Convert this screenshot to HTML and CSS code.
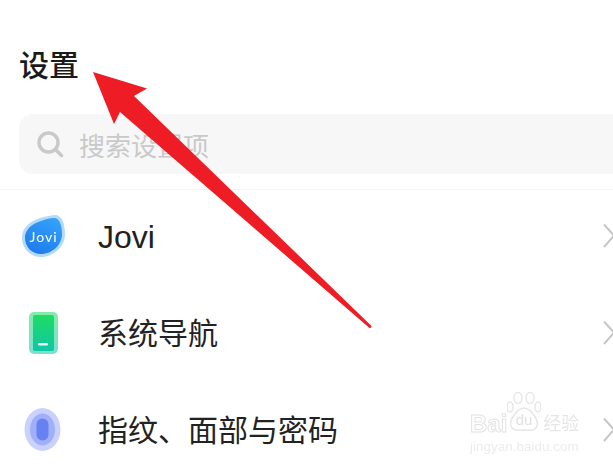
FILE: index.html
```html
<!DOCTYPE html>
<html lang="zh-CN">
<head>
    <meta charset="UTF-8">
    <meta name="viewport" content="width=device-width, initial-scale=1.0">
    <title>设置</title>
    <link rel="stylesheet" href="styles.css">
</head>
<body>
    <div class="page">
        <h1 class="title">设置</h1>
        <div class="search">
            <svg class="search-icon" width="28" height="28" viewBox="0 0 28 28">
                <circle cx="12.5" cy="12.5" r="9.5" fill="none" stroke="#c9c9c9" stroke-width="3.4"/>
                <path d="M19.5 19.5L25.5 25.5" stroke="#c9c9c9" stroke-width="3.6" stroke-linecap="round"/>
            </svg>
            <span class="search-text">搜索设置项</span>
        </div>
        <div class="list">
            <div class="row">
                <svg class="row-icon" width="44" height="44" viewBox="0 0 44 44">
                    <defs>
                        <linearGradient id="jovi" x1="0.8" y1="0" x2="0.3" y2="1">
                            <stop offset="0" stop-color="#35a2fa"/>
                            <stop offset="1" stop-color="#1f7bee"/>
                        </linearGradient>
                    </defs>
                    <path d="M33 1C40 0 44 8 44 20C44 33 32 43 20 43C9 43 1 34 1 24C1 13 10 4 33 1Z" fill="#b4daf9"/>
                    <path d="M32 4C38 3 41 10 41 20C41 31 31 40 20 40C11 40 4 33 4 24C4 15 12 7 32 4Z" fill="url(#jovi)"/>
                    <text class="jovi-mark" x="22.500" y="27.500" text-anchor="middle">Jovi</text>
                </svg>
                <span class="row-label row-label-latin">Jovi</span>
                <svg class="chevron" width="12" height="26" viewBox="0 0 12 26">
                    <path d="M1 1.500L11 12.500L1 24" fill="none" stroke="#c6c6c6" stroke-width="2"/>
                </svg>
            </div>
            <div class="row">
                <svg class="row-icon" width="44" height="44" viewBox="0 0 44 44">
                    <defs>
                        <linearGradient id="phone" x1="0" y1="0" x2="0" y2="1">
                            <stop offset="0" stop-color="#1fdc62"/>
                            <stop offset="1" stop-color="#10c6a6"/>
                        </linearGradient>
                    </defs>
                    <rect x="8" y="1" width="29" height="42" rx="5" fill="url(#phone)" opacity="0.55"/>
                    <rect x="12" y="4" width="21" height="36" rx="2" fill="url(#phone)"/>
                    <rect x="17" y="32" width="10" height="2.400" rx="1.200" fill="#e8fff6"/>
                </svg>
                <span class="row-label">系统导航</span>
                <svg class="chevron" width="12" height="26" viewBox="0 0 12 26">
                    <path d="M1 1.500L11 12.500L1 24" fill="none" stroke="#c6c6c6" stroke-width="2"/>
                </svg>
            </div>
            <div class="row">
                <svg class="row-icon" width="44" height="44" viewBox="0 0 44 44">
                    <ellipse cx="21.500" cy="21.500" rx="18" ry="21.500" fill="#c9d2fc"/>
                    <ellipse cx="21.500" cy="21.500" rx="12.500" ry="16" fill="#a0aff7"/>
                    <rect x="15.500" y="10.500" width="12" height="22" rx="6" fill="#6681f2"/>
                </svg>
                <span class="row-label">指纹、面部与密码</span>
                <svg class="chevron" width="12" height="26" viewBox="0 0 12 26">
                    <path d="M1 1.500L11 12.500L1 24" fill="none" stroke="#c6c6c6" stroke-width="2"/>
                </svg>
            </div>
        </div>

        <svg class="arrow" width="613" height="468" viewBox="0 0 613 468">
            <path d="M93 72L147 88.500L134 96L371 325.500Q372.500 328 369.500 328L120 112L114 124Z" fill="#ee1c25"/>
        </svg>

        <div class="watermark">
            <div class="wm-top">
                <span class="wm-bai">Bai</span>
                <svg class="wm-paw" width="34" height="44" viewBox="0 0 34 44">
                    <g fill="none" stroke="#e6e6e6" stroke-width="1.500">
                        <ellipse cx="3" cy="15" rx="3" ry="5"/>
                        <ellipse cx="11" cy="6" rx="4" ry="5.500"/>
                        <ellipse cx="23" cy="6" rx="4" ry="5.500"/>
                        <ellipse cx="31" cy="15" rx="3" ry="5"/>
                        <path d="M17 16C24 16 32 28 30 34C28 40 22 38 17 38C12 38 6 40 4 34C2 28 10 16 17 16Z"/>
                    </g>
                    <text class="wm-du" x="17" y="33" text-anchor="middle">du</text>
                </svg>
                <span class="wm-cn">经验</span>
            </div>
            <div class="wm-url">jingyan.baidu.com</div>
        </div>
    </div>
</body>
</html>
```
FILE: styles.css
```css
html, body {
    margin: 0;
    padding: 0;
    background: #fff;
}

.page {
    position: relative;
    width: 613px;
    height: 468px;
    overflow: hidden;
    background: #fff;
    font-family: "Liberation Sans", "Noto Sans CJK SC", sans-serif;
}

.title {
    margin: 0;
    padding: 49px 0 0 19px;
    box-sizing: border-box;
    height: 114px;
    font-size: 30px;
    line-height: 33px;
    font-weight: 500;
    color: #1a1a1a;
}

.search {
    display: flex;
    align-items: center;
    gap: 15px;
    height: 60px;
    margin-left: 19px;
    margin-right: -20px;
    padding-left: 17px;
    background: #f7f7f7;
    border-radius: 14px;
}

.search-text {
    font-size: 26px;
    color: #c9c9c9;
}

.list {
    margin-top: 15px;
    border-top: 1px solid #f4f4f4;
}

.row {
    display: flex;
    align-items: center;
    height: 97px;
    padding-left: 21px;
}

.row:first-child {
    margin-top: -3px;
}

.row-icon {
    flex: none;
    filter: blur(0.4px);
}

.row-label {
    flex: 1;
    margin-left: 33px;
    padding-top: 3px;
    font-size: 30px;
    line-height: 36px;
    color: #222;
}

.row-label-latin {
    font-size: 32px;
    font-weight: 300;
}

.chevron {
    flex: none;
    margin-right: -2px;
    margin-left: 8px;
}

.jovi-mark {
    font-size: 14px;
    letter-spacing: 1px;
    fill: #fff;
    font-family: "Lato", sans-serif;
}

/* arrow drawn over the screenshot */
.arrow {
    position: absolute;
    left: 0;
    top: 0;
}

.watermark {
    position: absolute;
    left: 470px;
    top: 400px;
    width: 112px;
    color: #e6e6e6;
    filter: blur(0.3px);
}

.wm-top {
    display: flex;
    align-items: flex-end;
    height: 36px;
}

.wm-bai {
    font-size: 24px;
    line-height: 24px;
    font-weight: 700;
    color: #fff;
    -webkit-text-stroke: 1px #e4e4e4;
}

.wm-paw {
    flex: none;
    margin-top: -8px;
}

.wm-du {
    font-size: 15px;
    fill: #e0e0e0;
    font-family: "Liberation Sans", sans-serif;
}

.wm-cn {
    font-size: 18px;
    line-height: 24px;
    margin-left: 2px;
    color: #e6e6e6;
}

.wm-url {
    font-size: 13.500px;
    line-height: 16px;
    margin-top: 3px;
    white-space: nowrap;
    color: #ececec;
}
```
